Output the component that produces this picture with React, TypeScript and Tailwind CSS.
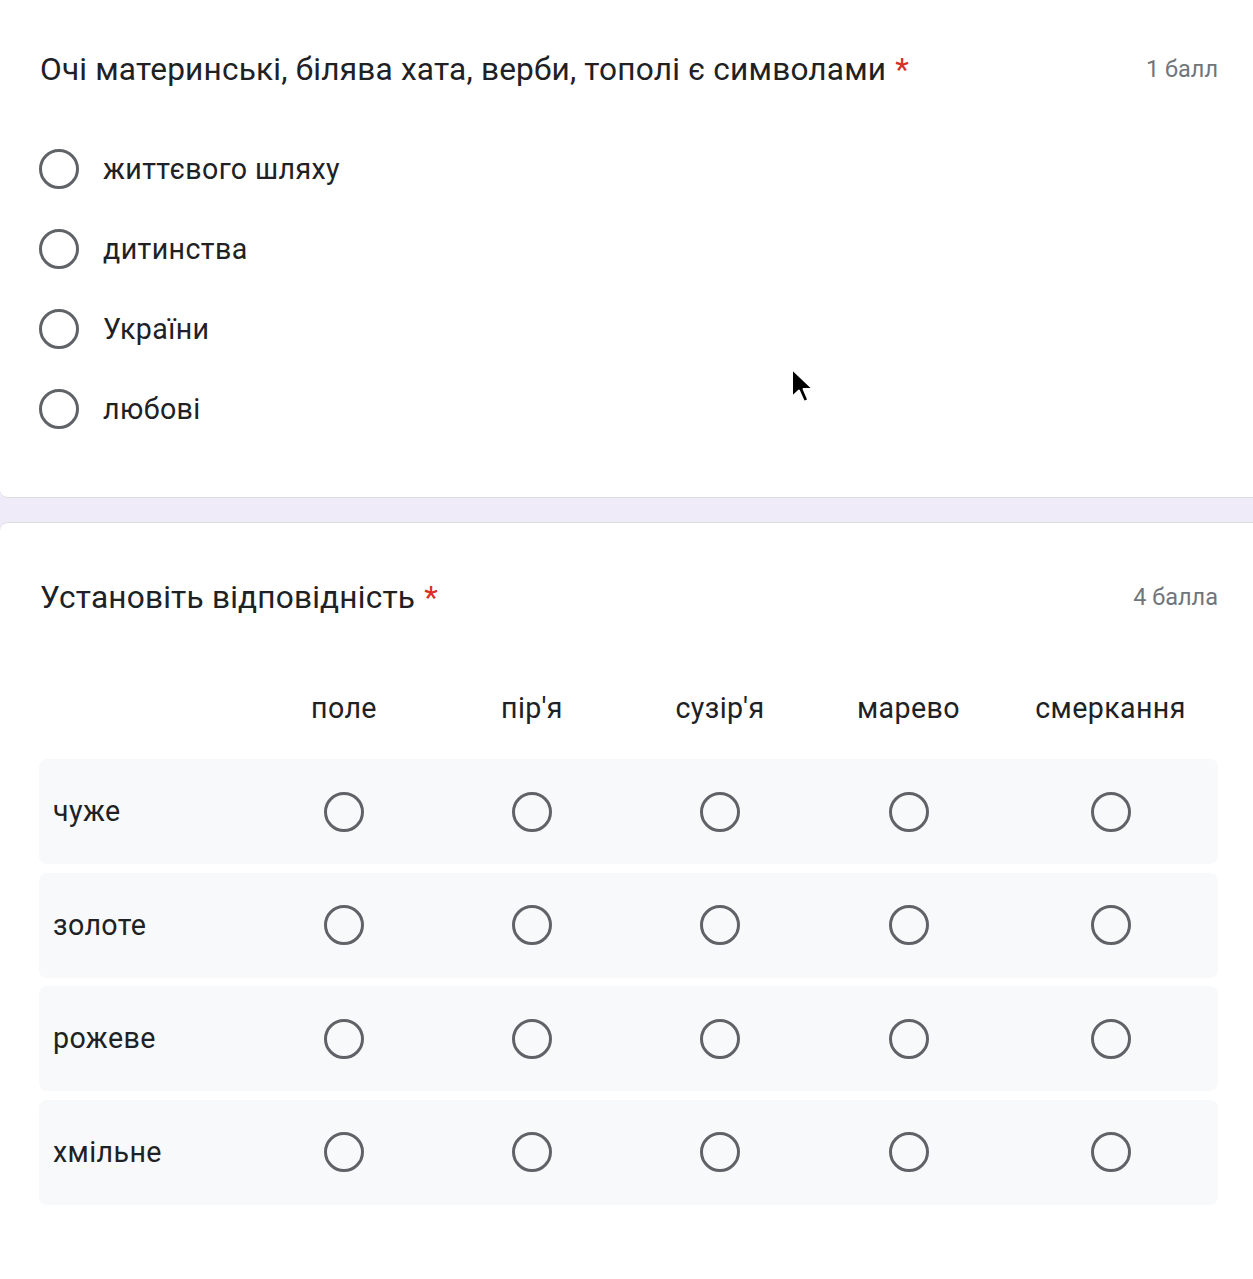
import React from 'react';

const FONT = { fontFamily: 'Roboto, "Noto Sans", Arial, sans-serif' };

const Radio = () => (
  <div className="h-[40px] w-[40px] shrink-0 rounded-full border-[3.5px] border-[#5f6368] bg-transparent" />
);

const Required = () => <span className="ml-[9px] text-[#d93025]">*</span>;

const options = ['життєвого шляху', 'дитинства', 'України', 'любові'];
const columns = ['поле', "пір'я", "сузір'я", 'марево', 'смеркання'];
const rows = ['чуже', 'золоте', 'рожеве', 'хмільне'];

const Cursor = () => (
  <svg
    className="pointer-events-none absolute left-[790px] top-[367px]"
    width="26"
    height="38"
    viewBox="0 0 13 19"
  >
    <path
      d="M1 1 L1 15 L4.5 11.8 L7 17.5 L9.2 16.5 L6.8 11 L11.5 11 Z"
      fill="#000"
      stroke="#fff"
      strokeWidth="1"
      strokeLinejoin="round"
    />
  </svg>
);

export default function App() {
  return (
    <div className="relative flex min-h-screen w-full flex-col bg-[#f0ebf8] text-[#202124]" style={FONT}>
      {/* Question 1 */}
      <div className="h-[498px] rounded-bl-[8px] border-b-[1.5px] border-[#dadce0] bg-white pl-[40px] pr-[35px] pt-[50px]">
        <div className="flex h-[40px] items-center justify-between">
          <div className="text-[31.6px] leading-[40px] tracking-[0.2px]">
            Очі материнські, білява хата, верби, тополі є символами
            <Required />
          </div>
          <div className="text-[23.5px] text-[#70757a]">1 балл</div>
        </div>
        <div className="mt-[39px] flex flex-col">
          {options.map((o) => (
            <div key={o} className="flex h-[80px] items-center">
              <div className="-ml-[1px]">
                <Radio />
              </div>
              <span className="ml-[24px] text-[28.6px] tracking-[0.4px]">{o}</span>
            </div>
          ))}
        </div>
      </div>

      <div className="h-[24px]" />

      {/* Question 2 */}
      <div className="flex-1 rounded-tl-[8px] border-t-[1.5px] border-[#dadce0] bg-white pl-[39px] pr-[35px] pt-[55px]">
        <div className="flex h-[40px] items-center justify-between pl-[1px]">
          <div className="text-[31.6px] leading-[40px] tracking-[0.2px]">
            Установіть відповідність
            <Required />
          </div>
          <div className="text-[23.5px] text-[#70757a]">4 балла</div>
        </div>

        <div className="mt-[65px] grid h-[50px] grid-cols-[211px_188px_188px_188px_189px_1fr] items-center">
          <div />
          {columns.map((c) => (
            <div key={c} className="text-center text-[28.6px] tracking-[0.4px]">
              {c}
            </div>
          ))}
        </div>

        <div className="mt-[26px] flex flex-col gap-[8.5px]">
          {rows.map((r) => (
            <div
              key={r}
              className="grid h-[105px] grid-cols-[211px_188px_188px_188px_189px_1fr] items-center rounded-[8px] bg-[#f8f9fa]"
            >
              <div className="pl-[14px] text-[28.6px] tracking-[0.4px]">{r}</div>
              {columns.map((c) => (
                <div key={c} className="flex justify-center">
                  <Radio />
                </div>
              ))}
            </div>
          ))}
        </div>
      </div>

      <Cursor />
    </div>
  );
}
